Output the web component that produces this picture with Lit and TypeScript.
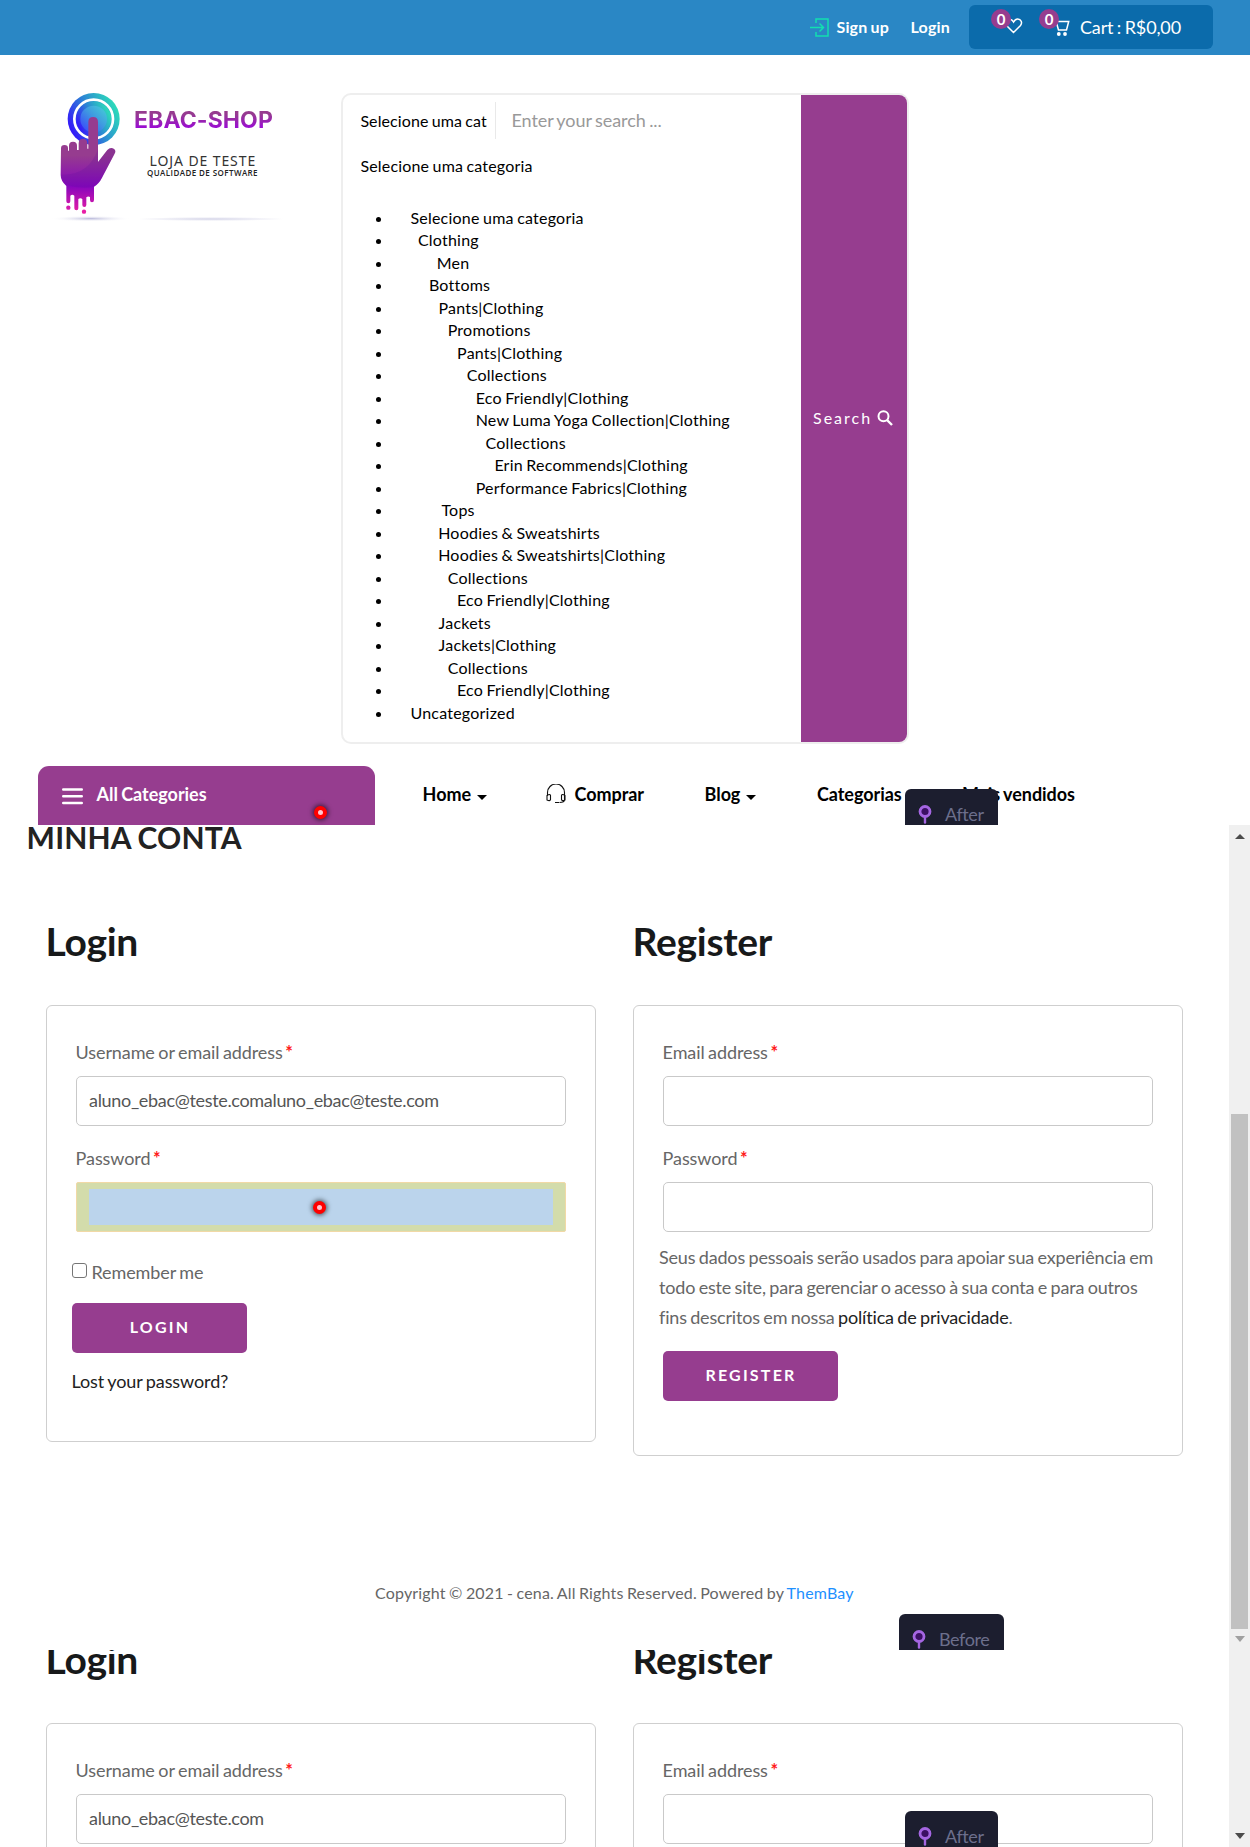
import { LitElement, html, css, svg, nothing } from "lit";
import { customElement, property } from "lit/decorators.js";

const CATEGORIES: [string, number][] = [
  ["Selecione uma categoria", 0], ["Clothing", 7.5], ["Men", 26.3], ["Bottoms", 18.5],
  ["Pants|Clothing", 28], ["Promotions", 37.3], ["Pants|Clothing", 46.7], ["Collections", 56.3],
  ["Eco Friendly|Clothing", 65.3], ["New Luma Yoga Collection|Clothing", 65.3], ["Collections", 75.2],
  ["Erin Recommends|Clothing", 84], ["Performance Fabrics|Clothing", 65.3], ["Tops", 31],
  ["Hoodies & Sweatshirts", 27.8], ["Hoodies & Sweatshirts|Clothing", 27.8], ["Collections", 37.3],
  ["Eco Friendly|Clothing", 46.6], ["Jackets", 28.2], ["Jackets|Clothing", 28.2],
  ["Collections", 37.3], ["Eco Friendly|Clothing", 46.6], ["Uncategorized", 0],
];

const FONT = css`
  * { box-sizing: border-box; }
  :host { font-family: "Lato", "Liberation Sans", sans-serif; word-spacing: -0.06em; white-space: nowrap; }
  svg { display: block; flex: none; }
`;

const caret = html`<svg class="caret" width="10" height="5" viewBox="0 0 10 5"><path d="M0 0h10L5 5z" fill="currentColor"/></svg>`;

@customElement("shop-tag")
class ShopTag extends LitElement {
  @property() label = "";
  static styles = [FONT, css`
    :host { display: block; overflow: hidden; background: #1c1e2f; border-radius: 6px 6px 0 0; }
    .row { display: flex; align-items: flex-start; padding: 14px 0 0 13px; }
    .pin { margin-top: 1px; }
    .name { margin-left: 13px; font-size: 18px; line-height: 22px; letter-spacing: -0.4px; color: #6c6f8c; }
  `];
  render() {
    return html`<div class="row">
      <svg class="pin" width="14" height="20" viewBox="0 0 14 20"><path d="M7 12v6.500" stroke="#a566e2" stroke-width="2.400" stroke-linecap="round"/><circle cx="7" cy="7.500" r="5" fill="#3c1064" stroke="#a566e2" stroke-width="2.800"/></svg>
      <span class="name">${this.label}</span></div>`;
  }
}

@customElement("click-mark")
class ClickMark extends LitElement {
  static styles = css`
    :host { display: block; width: 13px; height: 13px; border: 4px solid #f00; border-radius: 50%; background: #ffc6cf; box-sizing: border-box; box-shadow: 0 0 5px 1px rgba(0, 0, 0, .65); }
  `;
  render() { return nothing; }
}

@customElement("scroll-track")
class ScrollTrack extends LitElement {
  @property({ type: Boolean }) end = false;
  static styles = css`
    :host { display: flex; flex-direction: column; align-items: center; width: 21px; background: #f0f0f0; flex: none; }
    .up { margin-top: 9px; }
    .thumb { width: 17px; height: 515px; margin-top: 275px; background: #c1c1c1; }
    .down { margin-top: 7px; }
    .last { margin-top: 183px; }
  `;
  render() {
    const down = (cls: string, fill: string) => html`<svg class=${cls} width="10" height="6" viewBox="0 0 10 6"><path d="M0 0h10L5 6z" fill=${fill}/></svg>`;
    return this.end ? down("last", "#4b4b4b") : html`
      <svg class="up" width="10" height="5" viewBox="0 0 10 5"><path d="M0 5h10L5 0z" fill="#4b4b4b"/></svg>
      <div class="thumb"></div>${down("down", "#a0a0a0")}`;
  }
}

@customElement("shop-accounts")
class ShopAccounts extends LitElement {
  @property() user = "";
  @property({ type: Boolean }) inspect = false;
  static styles = [FONT, css`
    :host { display: grid; grid-template-columns: 550px 550px; column-gap: 37px; padding-left: 46px; align-items: start; }
    h2 { margin: 0 0 40px -0.5px; font-size: 39px; line-height: 48px; font-weight: 700; letter-spacing: -0.3px; color: #17191a; }
    .card { border: 1px solid #cfcfcf; border-radius: 6px; padding: 31px 29px 0; color: #666; font-size: 18px; line-height: 30px; letter-spacing: -0.1px; }
    .login { height: 437px; }
    .register { height: 451px; }
    .label { margin-left: -0.4px; }
    .label + .input { margin-top: 9px; }
    .input + .label { margin-top: 17px; }
    .req { color: #ff1a1a; font-weight: 700; margin-left: -1px; }
    .input { height: 50px; border: 1px solid #c9c9c9; border-radius: 5px; padding: 0 12px; line-height: 47px; color: #555; letter-spacing: -0.32px; }
    .marked { position: relative; border-color: #f1d9a6; border-radius: 2px; background: #d3dcab; padding: 6px 12px; }
    .fill { height: 36px; background: #bbd4ec; }
    .marked click-mark { position: absolute; left: 236px; top: 18px; }
    .remember { display: flex; align-items: center; gap: 4.500px; margin: 25px 0 0 -4px; }
    .check { width: 15px; height: 15px; border: 1px solid #767676; border-radius: 3px; margin-top: -3px; }
    .btn { width: 175px; height: 50px; border-radius: 5px; background: #963d8f; color: #fff; font-size: 16px; font-weight: 700; line-height: 48px; letter-spacing: 2.2px; text-align: center; padding-left: 1px; }
    .login .btn { margin: 16px 0 0 -4px; }
    .lost { margin: 13px 0 0 -4.500px; color: #222; }
    .note { margin: 10px 0 0 -4px; letter-spacing: -0.18px; }
    .note a { color: #222; }
    .register .btn { margin-top: 19px; }
  `];
  private field(name: string, body: unknown) {
    return html`<div class="label">${name} <span class="req">*</span></div>${body}`;
  }
  render() {
    const empty = html`<div class="input"></div>`;
    return html`
      <section><h2>Login</h2><div class="card login">
        ${this.field("Username or email address", html`<div class="input">${this.user}</div>`)}
        ${this.field("Password", this.inspect ? html`<div class="input marked"><div class="fill"></div><click-mark></click-mark></div>` : empty)}
        <div class="remember"><span class="check"></span><span>Remember me</span></div>
        <div class="btn">LOGIN</div>
        <div class="lost">Lost your password?</div>
      </div></section>
      <section><h2>Register</h2><div class="card register">
        ${this.field("Email address", empty)}
        ${this.field("Password", empty)}
        <div class="note">Seus dados pessoais serão usados para apoiar sua experiência em<br>todo este site, para gerenciar o acesso à sua conta e para outros<br>fins descritos em nossa <a>política de privacidade</a>.</div>
        <div class="btn">REGISTER</div>
      </div></section>`;
  }
}

const hand = svg`
  <defs>
    <linearGradient id="ring" x1="0" y1=".75" x2="1" y2=".25"><stop offset="0" stop-color="#3508ff"/><stop offset=".5" stop-color="#2c86d4"/><stop offset="1" stop-color="#2ce6b6"/></linearGradient>
    <linearGradient id="disc" x1="0" y1="1" x2="1" y2="0"><stop offset="0" stop-color="#3a3cff"/><stop offset=".55" stop-color="#3f9be0"/><stop offset="1" stop-color="#45d3d6"/></linearGradient>
    <linearGradient id="skin" gradientUnits="userSpaceOnUse" x1="0" y1="110" x2="0" y2="400"><stop offset="0" stop-color="#963c8f"/><stop offset=".4" stop-color="#963c8f"/><stop offset=".72" stop-color="#8606bd"/><stop offset="1" stop-color="#ec1fa4"/></linearGradient>
    <radialGradient id="shade"><stop offset="0" stop-color="#b9b9da"/><stop offset="1" stop-color="#fff" stop-opacity="0"/></radialGradient>
  </defs>
  <ellipse cx="152" cy="416" rx="122" ry="9" fill="url(#shade)"/>
  <circle cx="161" cy="117" r="78" fill="url(#ring)"/>
  <circle cx="161" cy="117" r="58" fill="none" stroke="#fff" stroke-width="8"/>
  <circle cx="161" cy="117" r="52" fill="url(#ring)"/>
  <circle cx="161" cy="117" r="40" fill="url(#disc)"/>
  <path fill="url(#skin)" d="M63 205q0-10 10.500-10t10.500 10v7h3v-15q0-12 12-12t12 12v13h5v-20q0-13 13-13t13 13v16h3V126q0-15 14.500-15t14.500 15v120l28-36q9-9 19-4 9 5 2 17l-37 70q-9 18-24 27v40q0 7-6 7t-6-7v-9q-6-3-11 1v23q0 6-6 6t-6-6v-18q-6-5-12 0v28q0 6-6 6t-6-6v-38q-6-6-12 0v17q0 6-6 6t-6-6v-46q-17-15-17-33z"/>
  <path fill="#5b0d9b" opacity=".2" d="M174 208v38l28-36q9-9 19-4 9 5 2 17l-37 70q-9 18-24 27-40 8-84-6-12-10-15-30 82 4 111-76z"/>
  <circle cx="85" cy="383" r="6.500" fill="#d41bad"/><circle cx="132" cy="395" r="6.500" fill="#e81fa5"/>`;

@customElement("app-root")
class AppRoot extends LitElement {
  static styles = [FONT, css`
    :host { display: block; width: 1250px; height: 1847px; overflow: hidden; background: #fff; color: #000; }
    .topbar { height: 55px; display: flex; justify-content: flex-end; background: #2a87c5; color: #fff; font-size: 16px; font-weight: 700; line-height: 54px; padding-right: 37px; }
    .enter { margin: 18px 8px 0 0; }
    .signup { width: 74px; letter-spacing: .15px; }
    .signin { width: 58.500px; letter-spacing: .2px; }
    .cart { display: flex; width: 244px; height: 44px; margin-top: 5px; background: #0b6bab; border-radius: 6px; font-size: 18px; font-weight: 400; line-height: 44px; }
    .slot { position: relative; width: 48px; }
    .slot:first-child { margin-left: 22px; }
    .slot .icon { position: absolute; left: 14px; top: 13px; }
    .badge { position: absolute; left: 0; top: 4px; width: 20px; height: 20px; border-radius: 50%; background: #963d8f; font-size: 15px; font-weight: 700; line-height: 20px; text-align: center; }
    .total { margin-left: -7px; letter-spacing: -0.15px; }
    .head { display: flex; height: 711px; }
    .mark { margin: 25px 0 0 40px; }
    .brand { width: 207px; padding-top: 50px; }
    .brand-name { font: 700 23px/30px "Inter", sans-serif; letter-spacing: .1px; background: linear-gradient(#963c8f 30%, #9b0ad6 78%); -webkit-background-clip: text; background-clip: text; color: transparent; width: 145px; }
    .brand-sub { font: 400 14px/20px "Noto Sans", sans-serif; letter-spacing: .9px; color: #333; margin: 16px 0 0 15.500px; word-spacing: 0; }
    .brand-tag { font: 600 8px/12px "Open Sans", sans-serif; letter-spacing: .42px; color: #222; margin: -4px 0 0 13px; word-spacing: 0; }
    .brand-line { height: 4px; width: 150px; margin: 38px 0 0 2px; background: radial-gradient(ellipse at center, #d4d4e8, rgba(255, 255, 255, 0) 70%); }
    .search { display: flex; width: 568px; height: 651px; margin-top: 38px; border: 2px solid #eee; border-radius: 10px; overflow: hidden; }
    .pick { width: 458px; padding-left: 17.400px; font-size: 16px; letter-spacing: .18px; }
    .bar { display: flex; align-items: center; height: 52px; }
    .sel { width: 134.600px; overflow: hidden; line-height: 52px; letter-spacing: .1px; }
    .sep { width: 1px; height: 37px; background: #e9e9e9; margin-top: -2px; }
    .hint { margin-left: 15.500px; font-size: 18px; letter-spacing: -0.08px; color: #999; line-height: 50px; margin-top: -2px; }
    .second { line-height: 38px; }
    .list { margin: 21.500px 0 0; padding: 0; list-style: none; letter-spacing: .23px; }
    .item { display: flex; align-items: center; height: 22.500px; line-height: 22.500px; padding-left: 15.600px; }
    .dot { width: 5px; height: 5px; border-radius: 50%; background: #000; margin: 3px 29.400px 0 0; flex: none; }
    .go { width: 106px; background: #963d8f; color: #fff; font-size: 16px; letter-spacing: 2px; display: flex; align-items: center; padding: 0 0 2px 12px; }
    .go svg { margin: 1px 0 0 5px; }
    .nav { display: grid; grid-template-columns: 337px 47.600px 123.900px 158.100px 112.400px 145px auto; padding-left: 38px; height: 59px; line-height: 57px; font-size: 18px; font-weight: 700; }
    .all { position: relative; display: flex; height: 59px; padding-left: 24px; background: #963d8f; color: #fff; border-radius: 11px 11px 0 0; line-height: 56px; letter-spacing: -0.03px; }
    .all svg { margin: 22px 13.500px 0 0; }
    .all click-mark { position: absolute; left: 276px; top: 40px; }
    .link { display: flex; align-items: center; height: 57px; letter-spacing: -0.05px; }
    .caret { margin: 5px 0 0 5.500px; }
    .phones { margin: -2px 8px 0 0; }
    .view { display: flex; overflow: hidden; }
    .first { height: 825px; }
    .again { height: 197px; }
    .page { width: 1229px; }
    h1 { margin: -6px 0 62px 26.600px; font-size: 30px; line-height: 36px; letter-spacing: .2px; color: #222; }
    .copy { margin: 127px 0 0 375px; font-size: 16px; line-height: 20px; letter-spacing: .18px; color: #666; }
    .copy a { color: #1e90ff; }
    .again shop-accounts { margin-top: -15px; }
    shop-tag { position: absolute; height: 36px; }
    .t1 { left: 905px; top: 789px; width: 93px; }
    .t2 { left: 899px; top: 1614px; width: 105px; }
    .t3 { left: 905px; top: 1811px; width: 93px; }
  `];
  render() {
    return html`
      <div class="topbar">
        <svg class="enter" width="19" height="19" viewBox="0 0 19 19" fill="none" stroke="#12e0b0" stroke-width="1.500"><path d="M6 5V1h12v17H6v-4M0 9.500h13M9.500 5.500l4 4-4 4"/></svg>
        <span class="signup">Sign up</span><span class="signin">Login</span>
        <div class="cart">
          <div class="slot"><svg class="icon" width="18" height="16" viewBox="0 0 18 16"><path d="M8.500 14.500 2 8C-.5 4.500 2 1 5 1.300c1.800.2 2.800 1.300 3.500 2.700C9.500 2.300 10.800 1 12.700 1c3.400 0 5 3.800 2.800 6.500z" fill="none" stroke="#fff" stroke-width="1.500"/></svg><span class="badge">0</span></div>
          <div class="slot"><svg class="icon" width="18" height="18" viewBox="0 0 18 18"><path d="M0 3h3l2.500 9h8l2.200-8.500H4" fill="none" stroke="#fff" stroke-width="1.500"/><circle cx="5.800" cy="16" r="1.900" fill="#fff"/><circle cx="12" cy="16" r="1.900" fill="#fff"/></svg><span class="badge">0</span></div>
          <span class="total">Cart : R$0,00</span>
        </div>
      </div>
      <div class="head">
        <svg class="mark" width="94" height="150" viewBox="0 0 282 450">${hand}</svg>
        <div class="brand">
          <div class="brand-name">EBAC-SHOP</div>
          <div class="brand-sub">LOJA DE TESTE</div>
          <div class="brand-tag">QUALIDADE DE SOFTWARE</div>
          <div class="brand-line"></div>
        </div>
        <div class="search">
          <div class="pick">
            <div class="bar"><span class="sel">Selecione uma cat</span><span class="sep"></span><span class="hint">Enter your search ...</span></div>
            <div class="second">Selecione uma categoria</div>
            <ul class="list">${CATEGORIES.map(([name, indent]) => html`<li class="item"><span class="dot"></span><span style="margin-left:${indent}px">${name}</span></li>`)}</ul>
          </div>
          <div class="go">Search<svg width="16" height="16" viewBox="0 0 16 16" fill="none" stroke="#fff" stroke-width="2"><circle cx="6.500" cy="6.300" r="5"/><path d="m10 10 5 5" stroke-width="2.400"/></svg></div>
        </div>
      </div>
      <div class="nav">
        <div class="all"><svg width="21" height="17" viewBox="0 0 21 17" stroke="#fff" stroke-width="2.400" stroke-linecap="round"><path d="M1.200 1.500h18.600M1.200 8.300h18.600M1.200 15h18.600"/></svg>All Categories<click-mark></click-mark></div>
        <span></span>
        <div class="link">Home${caret}</div>
        <div class="link"><svg class="phones" width="20" height="20" viewBox="0 0 20 20" fill="none" stroke="#111" stroke-width="1.100"><path d="M1.500 12V8.500a8 8 0 0 1 17 0V16q0 2.500-5 2.500M1 11.500q3-2 3.500 0v4q-.5 2-3.500.5zM19 11.500q-3-2-3.500 0v4q.5 2 3.500.5zM9 18.500h4"/></svg>Comprar</div>
        <div class="link">Blog${caret}</div>
        <div class="link">Categorias</div>
        <div class="link">Mais vendidos</div>
      </div>
      <div class="view first">
        <div class="page">
          <h1>MINHA CONTA</h1>
          <shop-accounts user="aluno_ebac@teste.comaluno_ebac@teste.com" inspect></shop-accounts>
          <div class="copy">Copyright © 2021 - cena. All Rights Reserved. Powered by <a>ThemBay</a></div>
        </div>
        <scroll-track></scroll-track>
      </div>
      <div class="view again">
        <div class="page"><shop-accounts user="aluno_ebac@teste.com"></shop-accounts></div>
        <scroll-track end></scroll-track>
      </div>
      <shop-tag class="t1" label="After"></shop-tag>
      <shop-tag class="t2" label="Before"></shop-tag>
      <shop-tag class="t3" label="After"></shop-tag>`;
  }
}
